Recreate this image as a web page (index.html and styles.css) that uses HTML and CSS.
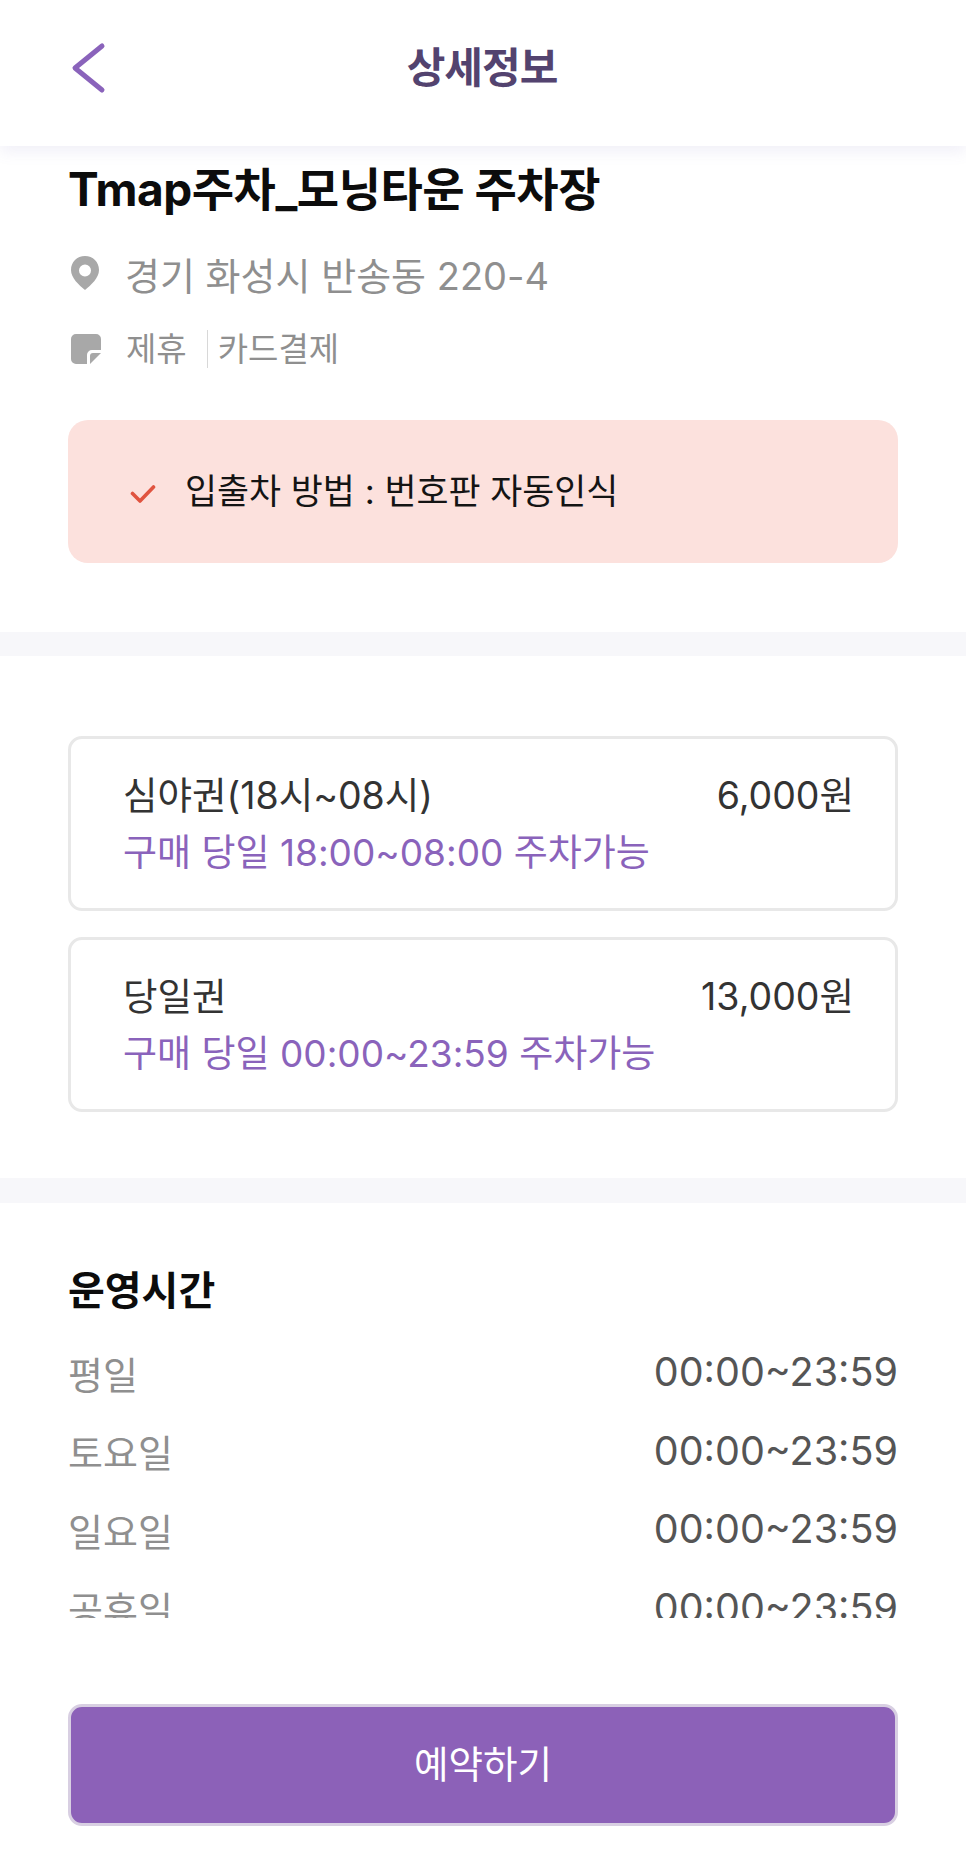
FILE: index.html
```html
<!DOCTYPE html>
<html lang="ko">
<head>
    <meta charset="UTF-8">
    <meta name="viewport" content="width=device-width, initial-scale=1.0">
    <title>상세정보</title>
    <link rel="stylesheet" href="styles.css">
</head>
<body>
    <div class="page">
        <header class="top-bar">
            <svg class="back-icon" viewBox="0 0 36 52" width="36" height="52">
                <path d="M32 4 L5 26 L32 48" fill="none" stroke="#8a63bb" stroke-width="5" stroke-linecap="round" stroke-linejoin="round"/>
            </svg>
            <h1>상세정보</h1>
        </header>

        <main class="content">
            <section class="info">
                <h2 class="lot-name">Tmap주차_모닝타운 주차장</h2>
                <div class="address">
                    <svg class="row-icon" viewBox="0 0 28 34" width="28" height="34">
                        <path fill-rule="evenodd" d="M14 0C6 0 0 6 0 14c0 8 8 15 14 20 6-5 14-12 14-20C28 6 22 0 14 0Zm0 8.500a6 6 0 1 1 0 12 6 6 0 0 1 0-12Z" fill="#a8a8a8"/>
                    </svg>
                    <span>경기 화성시 반송동 220-4</span>
                </div>
                <div class="tags">
                    <svg class="row-icon" viewBox="0 0 30 30" width="30" height="30">
                        <path d="M5 0h20a5 5 0 0 1 5 5v11h-9a5 5 0 0 0-5 5v9H5a5 5 0 0 1-5-5V5a5 5 0 0 1 5-5Z" fill="#a8a8a8"/>
                        <path d="M30 19 19 30v-8a3 3 0 0 1 3-3Z" fill="#a8a8a8"/>
                    </svg>
                    <span class="tag">제휴</span>
                    <span class="tag tag-line">카드결제</span>
                </div>
                <div class="notice">
                    <svg class="check-icon" viewBox="0 0 26 20" width="26" height="20">
                        <path d="M2.500 9.500 10 17 23.500 3" fill="none" stroke="#e0533f" stroke-width="3.600" stroke-linecap="round" stroke-linejoin="round"/>
                    </svg>
                    <span>입출차 방법 : 번호판 자동인식</span>
                </div>
            </section>

            <section class="tickets">
                <div class="ticket">
                    <div class="ticket-row">
                        <span>심야권(18시~08시)</span>
                        <span>6,000원</span>
                    </div>
                    <div class="ticket-note">구매 당일 18:00~08:00 주차가능</div>
                </div>
                <div class="ticket">
                    <div class="ticket-row">
                        <span>당일권</span>
                        <span>13,000원</span>
                    </div>
                    <div class="ticket-note">구매 당일 00:00~23:59 주차가능</div>
                </div>
            </section>

            <section class="hours">
                <h3>운영시간</h3>
                <div class="hours-row"><span class="day">평일</span><span class="time">00:00~23:59</span></div>
                <div class="hours-row"><span class="day">토요일</span><span class="time">00:00~23:59</span></div>
                <div class="hours-row"><span class="day">일요일</span><span class="time">00:00~23:59</span></div>
                <div class="hours-row"><span class="day">공휴일</span><span class="time">00:00~23:59</span></div>
            </section>
        </main>

        <footer class="bottom-bar">
            <button class="reserve">예약하기</button>
        </footer>
    </div>
</body>
</html>
```

FILE: styles.css
```css
* {
    box-sizing: border-box;
}

body {
    margin: 0;
    background-color: #fff;
    font-family: Inter, "Noto Sans CJK KR", sans-serif;
}

.page {
    display: flex;
    flex-direction: column;
    height: 1852px;
    overflow: hidden;
}

.top-bar {
    position: relative;
    z-index: 1;
    flex: none;
    display: flex;
    align-items: center;
    justify-content: center;
    height: 146px;
    background: #fff;
    box-shadow: 0 6px 14px rgba(120, 110, 190, 0.1);
}

.top-bar h1 {
    margin: 0 2px 18px 0;
    font-size: 42px;
    font-weight: 700;
    letter-spacing: -1px;
    color: #53436f;
}

.back-icon {
    position: absolute;
    left: 70px;
    top: 42px;
}

.content {
    height: 1472px;
    flex: none;
    overflow: hidden;
}

.info {
    padding: 12px 68px 69px;
    border-bottom: 24px solid #f7f7fa;
}

.lot-name {
    margin: 0;
    font-size: 46px;
    line-height: 62px;
    font-weight: 700;
    letter-spacing: -0.5px;
    color: #0c0c0c;
}

.address {
    display: flex;
    align-items: center;
    gap: 26px;
    margin-top: 25px;
    height: 56px;
    font-size: 38px;
    color: #8f8f8f;
}

.row-icon {
    flex: none;
    margin-left: 3px;
}

.tags {
    display: flex;
    align-items: center;
    margin-top: 28px;
    height: 40px;
    font-size: 33px;
    line-height: 38px;
    color: #8f8f8f;
}

.tags .row-icon {
    margin-right: 25px;
    margin-left: 3px;
}

.tag-line {
    margin-left: 20px;
    padding-left: 10px;
    border-left: 1px solid #d8d8d8;
}

.notice {
    display: flex;
    align-items: center;
    gap: 29px;
    height: 143px;
    margin-top: 51px;
    padding: 0 63px 6px 62px;
    background-color: #fce1dd;
    border-radius: 20px;
    font-size: 34.800px;
    color: #141414;
}

.check-icon {
    margin-top: 10px;
}

.tickets {
    display: flex;
    flex-direction: column;
    gap: 26px;
    padding: 80px 68px 66px;
    border-bottom: 25px solid #f7f7fa;
}

.ticket {
    height: 175px;
    padding: 28px 41px 0 52px;
    border: 3px solid #e8e8e8;
    border-radius: 14px;
}

.ticket-row {
    display: flex;
    justify-content: space-between;
    font-size: 37.500px;
    line-height: 58px;
    color: #333;
}

.ticket-note {
    font-size: 37px;
    line-height: 56px;
    color: #8a63bb;
}

.hours {
    padding: 59px 68px 0;
}

.hours h3 {
    margin: 0 0 13px;
    font-size: 40px;
    line-height: 58px;
    font-weight: 700;
    color: #0c0c0c;
}

.hours-row {
    display: flex;
    justify-content: space-between;
    align-items: center;
    height: 78.500px;
    font-size: 38px;
}

.day {
    color: #8f8f8f;
}

.time {
    font-size: 39.500px;
    color: #555;
}

.bottom-bar {
    flex: 1;
    padding: 86px 68px 0;
    background: #fff;
}

.reserve {
    display: block;
    width: 100%;
    height: 122px;
    padding: 0 0 8px;
    background-color: #8c61b8;
    border: 3px solid #d8cfe2;
    border-radius: 14px;
    font-family: inherit;
    font-size: 37.500px;
    color: #fff;
}
```
